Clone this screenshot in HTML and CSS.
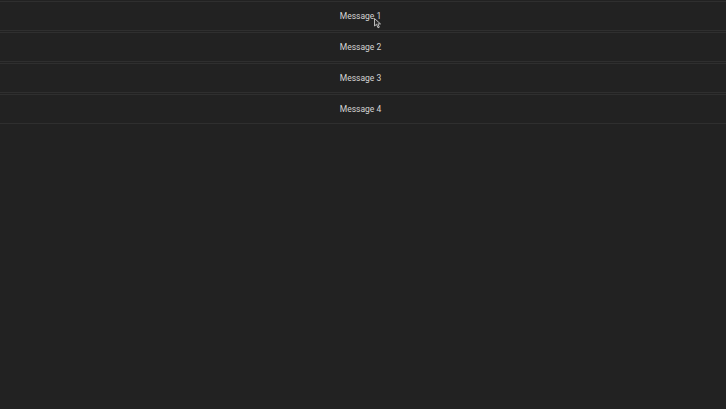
FILE: index.html
```html
<!DOCTYPE html>
<html>
<head>
<meta charset="utf-8">
<link rel="stylesheet" href="styles.css">
</head>
<body>
<div class="list">
  <div class="item">Message 1</div>
  <div class="item">Message 2</div>
  <div class="item">Message 3</div>
  <div class="item">Message 4</div>
</div>
<svg class="cursor" width="8" height="11" viewBox="0 0 8 11">
  <path d="M0.5 0.5 L0.5 8 L2.5 6.3 L4 9.8 L5.3 9.2 L3.9 5.9 L6.5 5.9 Z" fill="#2a2a2a" stroke="#bdbdbd" stroke-width="1"/>
</svg>
</body>
</html>
```
FILE: styles.css
```css
html, body {
  margin: 0;
  height: 100%;
  background: #222222;
}
.list {
  display: flex;
  flex-direction: column;
  gap: 1px;
  padding-top: 1px;
}
.item {
  height: 28px;
  padding-right: 5px;
  border-top: 1px solid #2f2f2f;
  border-bottom: 1px solid #2f2f2f;
  display: flex;
  align-items: center;
  justify-content: center;
  font-family: Roboto, "Liberation Sans", Arial, sans-serif;
  font-size: 8.5px;
  color: #d4d4d4;
}
.cursor {
  position: absolute;
  left: 374px;
  top: 18px;
}
```
